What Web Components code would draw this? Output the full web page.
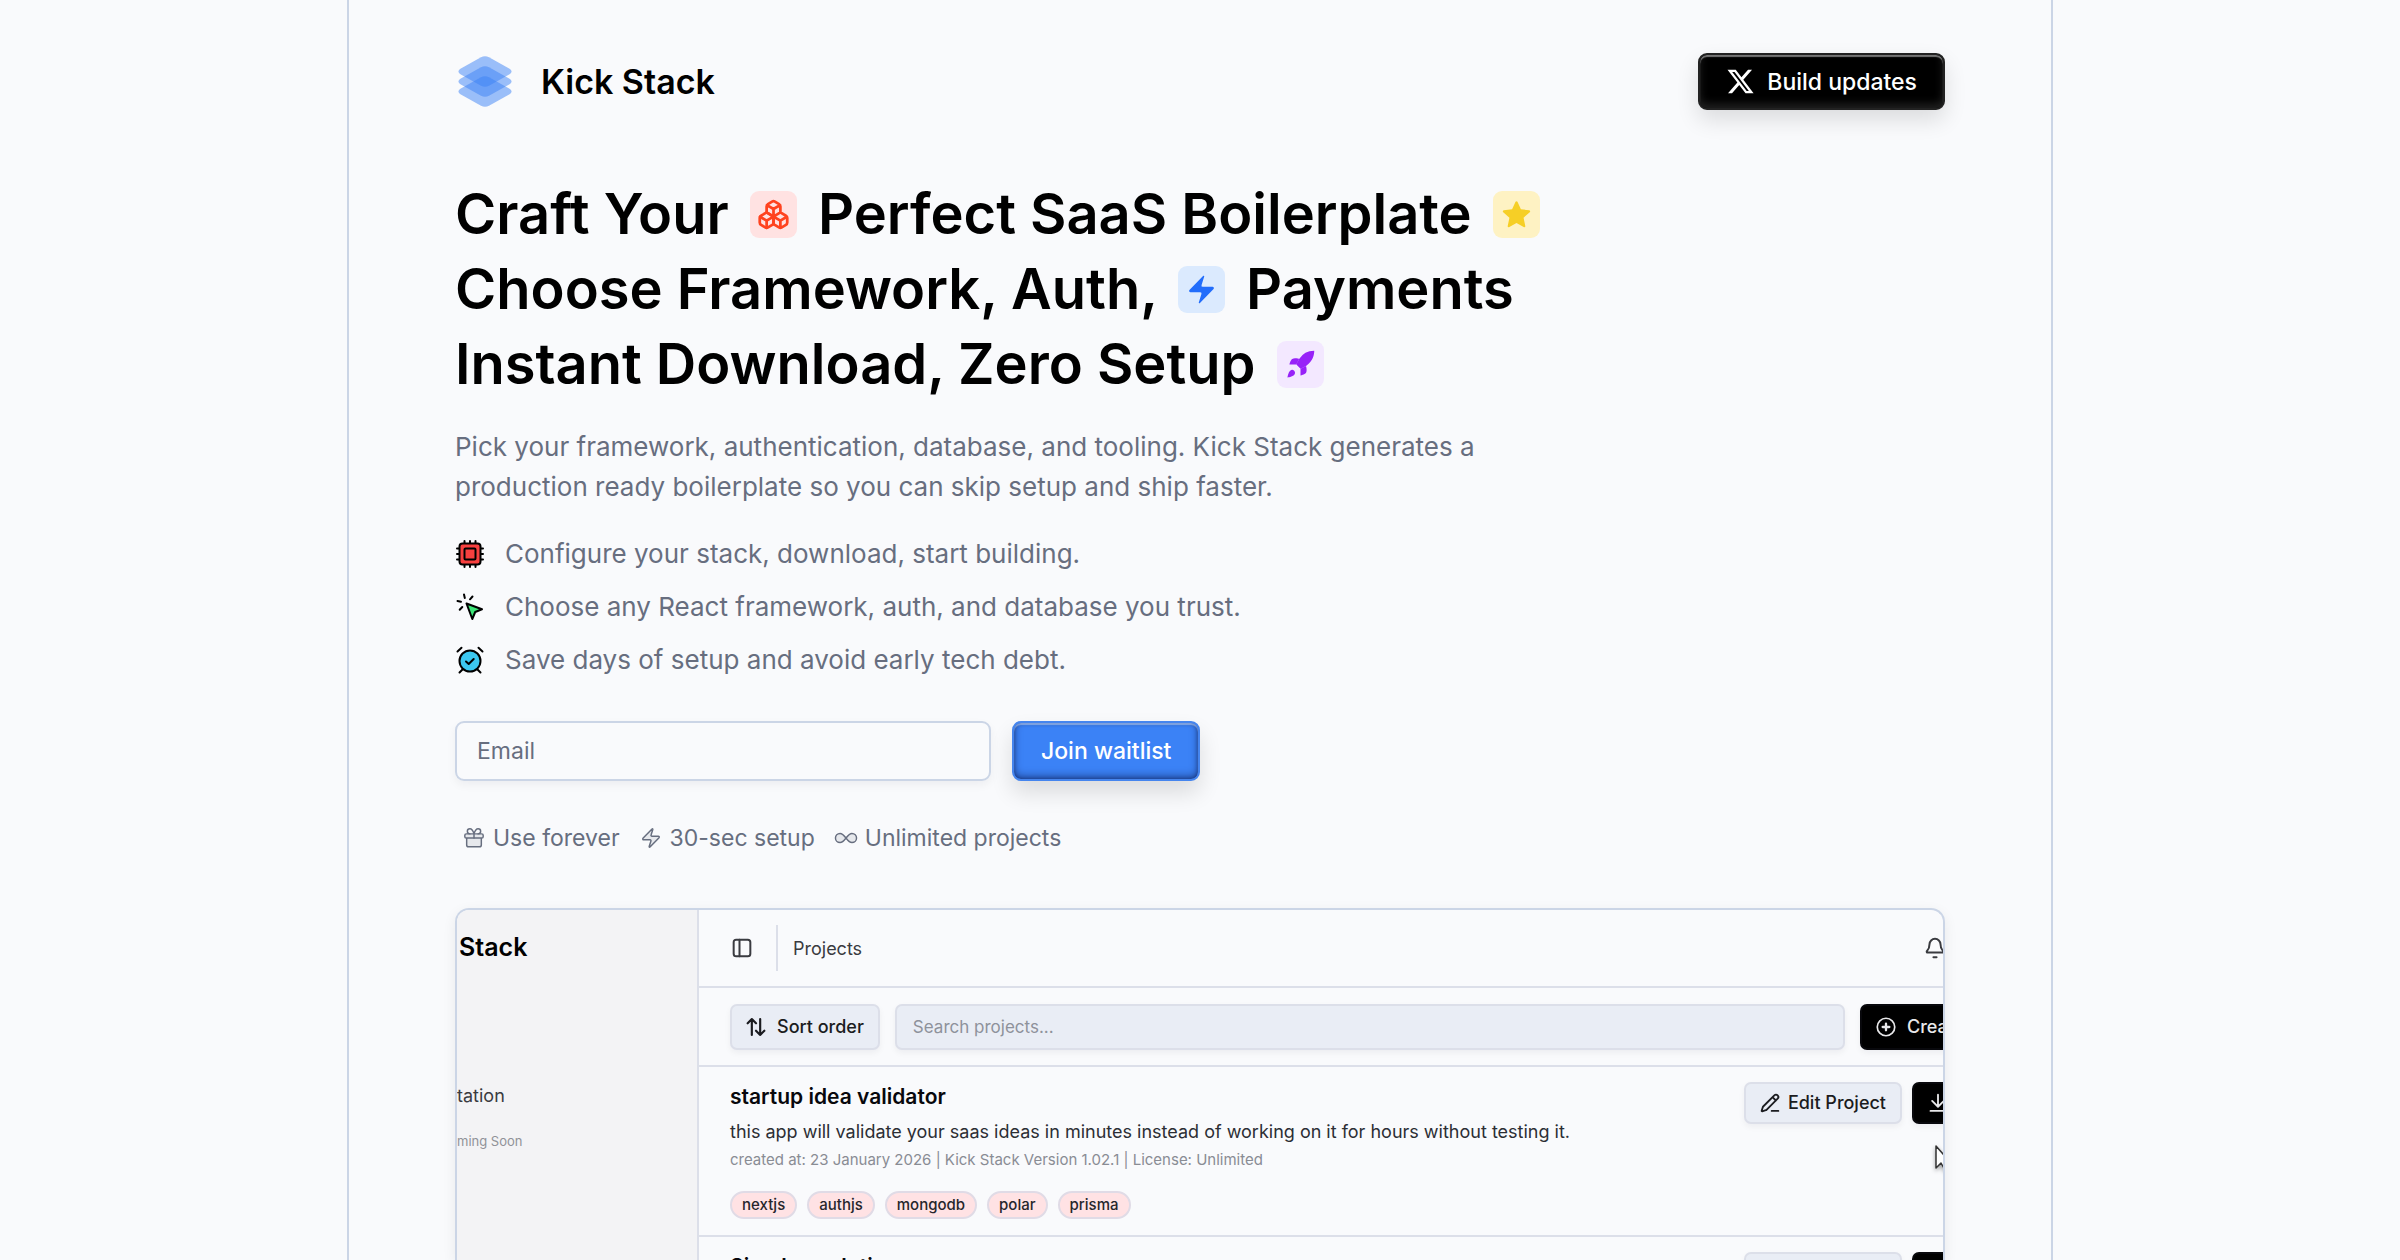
<!DOCTYPE html>
<html lang="en">
<head>
<meta charset="utf-8">
<meta name="viewport" content="width=device-width, initial-scale=1">
<title>Kick Stack</title>
<style>
  :root {
    --bg: #f9fafc;
    --line: #cbd5e6;
    --soft-line: #dcdfe9;
    --muted: #676e7f;
    --blue: #3b82f6;
    --ink: #000;
  }
  body { margin: 0; background: var(--bg); color: var(--ink); font-family: Inter, "Liberation Sans", sans-serif; }
</style>
</head>
<body>
<ks-page>
  <ks-header></ks-header>
  <ks-hero></ks-hero>
  <ks-preview></ks-preview>
</ks-page>

<script>
const ICONS = {
  logo: ['0 0 54 52', `<g fill="#3b82f6" fill-opacity=".5"><path d="M23 1.300Q27-.8 31 1.300L52 13Q55 15.500 52 18L31 29.700Q27 31.800 23 29.700L2 18Q-1 15.500 2 13Z"/><path d="M23 11.300Q27 9.200 31 11.300L52 23Q55 25.500 52 28L31 39.700Q27 41.800 23 39.700L2 28Q-1 25.500 2 23Z"/><path d="M23 21.300Q27 19.200 31 21.300L52 33Q55 35.500 52 38L31 49.700Q27 51.800 23 49.700L2 38Q-1 35.500 2 33Z"/></g>`],
  x: ['0 0 24 24', `<path fill="currentColor" d="M18.244 2.250h3.308l-7.227 8.260 8.502 11.240H16.170l-5.214-6.817L4.990 21.750H1.680l7.730-8.835L1.254 2.250H8.080l4.713 6.231zm-1.161 17.520h1.833L7.084 4.126H5.117z"/>`],
  boxes: ['0 0 24 24', `<g class="s" stroke-width="2"><path d="M2.970 12.920A2 2 0 0 0 2 14.630v3.240a2 2 0 0 0 .97 1.710l3 1.800a2 2 0 0 0 2.060 0L12 19v-5.500l-5-3-4.030 2.420Z"/><path d="m7 16.500-4.740-2.850M7 16.500l5-3M7 16.500v5.170M12 13.500V19l3.970 2.380a2 2 0 0 0 2.060 0l3-1.800a2 2 0 0 0 .97-1.710v-3.240a2 2 0 0 0-.97-1.710L17 10.500l-5 3ZM17 16.500l-5-3M17 16.500l4.740-2.850M17 16.500v5.170M7.970 4.420A2 2 0 0 0 7 6.130v4.370l5 3 5-3V6.130a2 2 0 0 0-.97-1.710l-3-1.800a2 2 0 0 0-2.060 0l-3 1.800ZM12 8 7.260 5.150M12 8l4.740-2.850M12 13.500V8"/></g>`],
  star: ['0 0 24 24', `<path fill="currentColor" d="M11.300 2.700a.8.800 0 0 1 1.400 0l2.500 5.500 6 .7a.8.800 0 0 1 .44 1.400l-4.500 4.050 1.250 5.950a.8.800 0 0 1-1.200.85L12 18.200l-5.200 2.950a.8.800 0 0 1-1.200-.85l1.250-5.950-4.500-4.050a.8.800 0 0 1 .44-1.400l6-.7z"/>`],
  zap: ['0 0 24 24', `<path fill="currentColor" d="M4 14a1 1 0 0 1-.78-1.630l9.900-10.200a.5.500 0 0 1 .86.460l-1.920 6.020A1 1 0 0 0 13 10h7a1 1 0 0 1 .78 1.630l-9.900 10.200a.5.500 0 0 1-.86-.46l1.920-6.020A1 1 0 0 0 11 14z"/>`],
  rocket: ['0 0 24 24', `<g fill="currentColor"><path d="M4.500 16.500c-1.500 1.260-2 5-2 5s3.740-.5 5-2c.71-.84.700-2.130-.09-2.910a2.180 2.180 0 0 0-2.910-.09z"/><path d="m12 15-3-3a22 22 0 0 1 2-3.950A12.880 12.880 0 0 1 22 2c0 2.720-.78 7.500-6 11a22.350 22.350 0 0 1-4 2z"/><path d="M9 12H4s.55-3.030 2-4c1.620-1.080 5 0 5 0zM12 15v5s3.030-.55 4-2c1.080-1.620 0-5 0-5z"/></g>`],
  chip: ['0 0 28 28', `<g stroke="#000" stroke-width="2" stroke-linecap="round" stroke-linejoin="round"><path d="M8.500 1v3M14 1v3M19.500 1v3M8.500 24v3M14 24v3M19.500 24v3M1 8.500h3M1 14h3M1 19.500h3M24 8.500h3M24 14h3M24 19.500h3"/><rect x="3.500" y="3.500" width="21" height="21" rx="3" fill="#f8403f"/><rect x="8.500" y="8.500" width="11" height="11" rx="1" fill="#f8403f"/></g>`],
  click: ['0 0 28 28', `<g stroke="#000" stroke-width="2" stroke-linecap="round" stroke-linejoin="round" fill="none"><path d="M8 1.500l.8 3.500M1.500 8l3.500.8M16.500 3.500L14 6.300M6.300 14l-2.600 2.800"/><path fill="#3ce577" d="M10.500 10.500L26 16.300l-6.800 2.700L16.300 26z"/></g>`],
  alarm: ['0 0 28 28', `<g stroke="#000" stroke-width="2" stroke-linecap="round" stroke-linejoin="round" fill="none"><path d="M1.500 5.500L5.500 1.800M26.500 5.500L22.500 1.800M6.500 23.500L3.500 26.500M21.500 23.500L24.500 26.500"/><circle cx="14" cy="15" r="10.500" fill="#3cc8f0"/><path d="M10 15.500l2.700 2.500 5-5"/></g>`],
  gift: ['0 0 24 24', `<g class="s" stroke-width="1.600"><path style="fill:#e6e8ec" d="M4 12v7.500a2 2 0 0 0 2 2h12a2 2 0 0 0 2-2V12"/><rect x="2" y="7.500" width="20" height="4.500" rx="1.500" style="fill:#e6e8ec"/><path d="M12 12V7.500C11 4 9.500 2 7.500 2a2.700 2.700 0 0 0 0 5.500M12 7.500C13 4 14.500 2 16.500 2a2.700 2.700 0 0 1 0 5.500"/></g>`],
  bolt: ['0 0 24 24', `<path class="s" stroke-width="1.600" style="fill:#e6e8ec" d="M4 14a1 1 0 0 1-.78-1.630l9.900-10.200a.5.500 0 0 1 .86.460l-1.920 6.020A1 1 0 0 0 13 10h7a1 1 0 0 1 .78 1.630l-9.900 10.200a.5.500 0 0 1-.86-.46l1.920-6.020A1 1 0 0 0 11 14z"/>`],
  infinity: ['0 0 24 24', `<path class="s" stroke-width="1.600" style="fill:#e6e8ec" d="M5.500 17c5.500 0 7.500-10 13-10a5 5 0 0 1 0 10c-5.500 0-7.500-10-13-10a5 5 0 1 0 0 10"/>`],
  panel: ['0 0 24 24', `<g class="s" stroke-width="2.400"><rect x="2" y="2" width="20" height="20" rx="3"/><path d="M9 2v20"/></g>`],
  sort: ['0 0 24 24', `<path class="s" stroke-width="2.600" d="M2 7.500 7 2.500l5 5M7 2.500v19M22 16.500l-5 5-5-5M17 21.500v-19"/>`],
  plus: ['0 0 24 24', `<g class="s" stroke-width="2"><circle cx="12" cy="12" r="10.500"/><path d="M8 12h8M12 8v8" stroke-width="2.800"/></g>`],
  pen: ['0 0 24 24', `<path class="s" stroke-width="2.200" d="M14 21.500h8M21.174 6.812a1 1 0 0 0-3.986-3.987L3.842 16.174a2 2 0 0 0-.5.830l-1.321 4.352a.5.500 0 0 0 .623.622l4.353-1.320a2 2 0 0 0 .83-.497zM15 5l4 4"/>`],
  download: ['0 0 24 24', `<path class="s" stroke-width="2.200" d="M12 16V2M5 9.500l7 7 7-7M21 21.500H3"/>`],
  bell: ['0 0 24 24', `<path class="s" stroke-width="2.200" d="M10.300 22h3.400M3.300 15.300A1 1 0 0 0 4 17h16a1 1 0 0 0 .74-1.670C19.400 14 18 12.500 18 8A6 6 0 0 0 6 8c0 4.500-1.400 6-2.700 7.300"/>`],
  pointer: ['0 0 16 26', `<path fill="#fff" stroke="#333" stroke-width="1.500" stroke-linejoin="round" d="M1 1v22l5-5 4 7 3-2-4-6h6z"/>`]
};

function define(name, html, ready) {
  const t = document.createElement('template');
  t.innerHTML = html;
  customElements.define(name, class extends HTMLElement {
    constructor() {
      super();
      this.attachShadow({ mode: 'open' }).append(t.content.cloneNode(true));
    }
    connectedCallback() { if (ready) ready(this, this.shadowRoot); }
  });
}

define('ks-icon', `
<style>
  :host { display: block; flex: none; width: var(--size, 24px); height: var(--size, 24px); }
  svg { display: block; width: 100%; height: 100%; overflow: visible; }
  .s { fill: none; stroke: currentColor; stroke-linecap: round; stroke-linejoin: round; }
</style>
<svg aria-hidden="true"></svg>`, (el, root) => {
  const [box, body] = ICONS[el.getAttribute('name')];
  const svg = root.querySelector('svg');
  svg.setAttribute('viewBox', box);
  svg.innerHTML = body;
});

define('ks-page', `
<style>
  :host { display: block; height: 100vh; overflow: hidden; padding: 0 24px; }
  main { box-sizing: border-box; display: flex; flex-direction: column; height: 100%; max-width: 1706px; margin: 0 auto; padding: 53px 106px 0; border: solid var(--line); border-width: 0 2px; }
</style>
<main><slot></slot></main>`);

/* Glossy button used in the header (dark) and in the form (blue). */
define('ks-button', `
<style>
  :host { display: block; flex: none; }
  button { display: flex; align-items: center; gap: 12px; height: var(--h, 57px); padding: 0 var(--pad, 26px); border: 2px solid #222; border-radius: 9px;
    background: #000; color: #fff; font: 500 23px/30px Inter, "Liberation Sans", sans-serif;
    box-shadow: inset 0 2px 1px rgba(255,255,255,.45), inset 0 -4px 8px rgba(255,255,255,.13), 0 10px 22px rgba(0,0,0,.12); }
  :host([blue]) button { background: var(--blue); border-color: #4585ee;
    box-shadow: inset 0 2px 1px rgba(255,255,255,.4), inset 0 -3px 8px rgba(0,0,40,.4), inset 0 0 4px rgba(0,0,40,.45), 0 12px 22px rgba(0,0,0,.12); }
</style>
<button type="button"><slot></slot></button>`);

define('ks-header', `
<style>
  header { display: flex; align-items: center; justify-content: space-between; margin-bottom: 67px; }
  a { display: flex; align-items: center; gap: 29px; padding-left: 3px; color: inherit; text-decoration: none; font-weight: 600; font-size: 34px; line-height: 40px; }
  a ks-icon { --size: 54px; }
  ks-button ks-icon { --size: 29px; }
</style>
<header>
  <a href="#"><ks-icon name="logo"></ks-icon>Kick Stack</a>
  <ks-button><ks-icon name="x"></ks-icon>Build updates</ks-button>
</header>`);

define('ks-chip', `
<style>
  :host { display: inline-block; overflow: hidden; box-sizing: border-box; width: 47px; height: 47px; margin: 0 7px; padding: 7px; border-radius: 9px; vertical-align: -4px; --size: 33px; }
  :host([tone=red]) { background: #ffe2e2; color: #ff431f; }
  :host([tone=yellow]) { background: #fef2c3; color: #f6cf26; }
  :host([tone=blue]) { background: #dbeafe; color: #226dfb; }
  :host([tone=purple]) { background: #f3e8ff; color: #9722f8; }
</style>
<slot></slot>`);

define('ks-feature', `
<style>
  :host { display: flex; align-items: center; gap: 21px; --size: 28px; }
</style>
<slot name="icon"></slot><span><slot></slot></span>`);

define('ks-waitlist', `
<style>
  form { display: flex; gap: 21px; margin-top: 41px; }
  input { box-sizing: border-box; width: 536px; height: 60px; padding: 0 20px; border: 2px solid var(--line); border-radius: 9px; background: transparent;
    font: 400 23px/30px Inter, "Liberation Sans", sans-serif; color: #000; box-shadow: 0 4px 10px rgba(0,0,30,.05); }
  input::placeholder { color: var(--muted); opacity: 1; }
  ks-button { --h: 60px; --pad: 27px; }
</style>
<form>
  <input type="email" placeholder="Email" aria-label="Email">
  <ks-button blue>Join waitlist</ks-button>
</form>`);

define('ks-perk', `
<style>
  :host { display: flex; align-items: center; gap: 8px; --size: 22px; }
</style>
<slot name="icon"></slot><span><slot></slot></span>`);

define('ks-hero', `
<style>
  h1 { margin: 0; font-weight: 600; font-size: 56px; line-height: 75px; }
  h1 span { display: block; white-space: nowrap; }
  p { max-width: 1060px; margin: 25px 0 0; }
  p, .features { color: var(--muted); font-size: 26px; line-height: 40px; }
  .features { display: flex; flex-direction: column; gap: 13px; margin-top: 27px; padding-left: 1px; }
  .perks { display: flex; gap: 20px; margin: 41px 0 54px; padding-left: 8px; color: var(--muted); font-size: 23px; line-height: 32px; }
</style>
<section>
  <h1>
    <span>Craft Your <ks-chip tone="red"><ks-icon name="boxes"></ks-icon></ks-chip> Perfect SaaS Boilerplate <ks-chip tone="yellow"><ks-icon name="star"></ks-icon></ks-chip></span>
    <span>Choose Framework, Auth, <ks-chip tone="blue"><ks-icon name="zap"></ks-icon></ks-chip> Payments</span>
    <span>Instant Download, Zero Setup <ks-chip tone="purple"><ks-icon name="rocket"></ks-icon></ks-chip></span>
  </h1>
  <p>Pick your framework, authentication, database, and tooling. Kick Stack generates a production ready boilerplate so you can skip setup and ship faster.</p>
  <div class="features">
    <ks-feature><ks-icon slot="icon" name="chip"></ks-icon>Configure your stack, download, start building.</ks-feature>
    <ks-feature><ks-icon slot="icon" name="click"></ks-icon>Choose any React framework, auth, and database you trust.</ks-feature>
    <ks-feature><ks-icon slot="icon" name="alarm"></ks-icon>Save days of setup and avoid early tech debt.</ks-feature>
  </div>
  <ks-waitlist></ks-waitlist>
  <div class="perks">
    <ks-perk><ks-icon slot="icon" name="gift"></ks-icon>Use forever</ks-perk>
    <ks-perk><ks-icon slot="icon" name="bolt"></ks-icon>30-sec setup</ks-perk>
    <ks-perk><ks-icon slot="icon" name="infinity"></ks-icon>Unlimited projects</ks-perk>
  </div>
</section>`);

/* Flat button of the app preview. */
define('ks-tool', `
<style>
  :host { display: block; flex: none; }
  button { box-sizing: border-box; display: flex; align-items: center; gap: var(--gap, 11px); width: 100%; height: var(--h, 42px); padding: 0 14px; border: 2px solid var(--soft-line); border-radius: 7px;
    background: #e9edf5; color: #1b1c20; font: 500 18px/24px Inter, "Liberation Sans", sans-serif; white-space: nowrap; box-shadow: 0 3px 6px rgba(0,0,30,.05); }
  :host([dark]) button { background: #000; border-color: #08080c; color: #e8e8ea; }
</style>
<button type="button"><slot></slot></button>`);

define('ks-tag', `
<style>
  :host { display: block; padding: 0 10px; border: 2px solid #e0dbe6; border-radius: 14px; background: #ffe2e4; color: #26262c; font-weight: 500; font-size: 15px; line-height: 24px; }
</style>
<slot></slot>`);

define('ks-project', `
<style>
  article { display: flex; justify-content: space-between; align-items: flex-start; box-sizing: border-box; height: 170px; padding: 15px 0 0 31px; border-bottom: 2px solid var(--soft-line); }
  h2 { margin: 0; font-weight: 600; font-size: 21px; line-height: 30px; color: #08080c; }
  .tags { display: flex; gap: 10px; margin-top: 19px; }
  .actions { display: flex; gap: 10px; --size: 20px; }
  .actions ks-tool { --gap: 8px; }
  .actions ks-tool[dark] { width: 95px; }
</style>
<article>
  <div>
    <h2><slot name="title"></slot></h2>
    <slot></slot>
    <div class="tags"><slot name="tags"></slot></div>
  </div>
  <div class="actions">
    <ks-tool><ks-icon name="pen"></ks-icon>Edit Project</ks-tool>
    <ks-tool dark><ks-icon name="download"></ks-icon></ks-tool>
  </div>
</article>`);

define('ks-preview', `
<style>
  :host { display: flex; flex: 1; min-height: 0; }
  .frame { position: relative; flex: 1; min-width: 0; display: flex; overflow: hidden; border: 2px solid var(--line); border-bottom: 0; border-radius: 14px 14px 0 0; box-shadow: 0 4px 14px rgba(0,0,30,.07); }
  aside { box-sizing: border-box; flex: none; width: 242px; border-right: 2px solid var(--soft-line); background: #f3f3f5; overflow: hidden; }
  .brand { padding: 22px 0 0 2px; font-weight: 600; font-size: 25px; line-height: 30px; }
  .nav { margin-top: 121px; font-size: 18px; line-height: 26px; color: #3a3b40; }
  .soon { margin-top: 22px; font-size: 13px; line-height: 20px; color: #909298; }
  .app { flex: none; width: calc(100% - 178px); }
  header { box-sizing: border-box; display: flex; align-items: center; height: 78px; padding: 0 61px 0 33px; border-bottom: 2px solid var(--soft-line); font-size: 18px; color: #3a3b40; --size: 20px; }
  header i { width: 2px; height: 46px; margin: 0 15px 0 24px; background: var(--soft-line); }
  header ks-icon:last-child { margin-left: auto; --size: 22px; }
  .bar { box-sizing: border-box; display: flex; align-items: center; gap: 15px; height: 79px; padding-left: 31px; border-bottom: 2px solid var(--soft-line); --h: 46px; --size: 20px; }
  .bar ks-tool[dark] { width: 147px; }
  input { flex: 1; min-width: 0; box-sizing: border-box; height: 46px; padding: 0 16px; border: 2px solid var(--soft-line); border-radius: 7px; background: #e9edf5; font: 400 17px/24px Inter, "Liberation Sans", sans-serif; box-shadow: 0 3px 6px rgba(0,0,30,.05); }
  input::placeholder { color: #8e929b; opacity: 1; }
  p { margin: 7px 0 0; font-size: 18px; line-height: 26px; color: #2c2e34; }
  small { display: block; margin-top: 3px; font-size: 15px; line-height: 24px; color: #898c94; }
  .pointer { position: absolute; right: -8px; top: 235px; width: 16px; height: 26px; filter: drop-shadow(0 2px 2px rgba(0,0,0,.35)); }
</style>
<div class="frame">
  <aside>
    <div class="brand">Stack</div>
    <div class="nav">tation</div>
    <div class="soon">ming Soon</div>
  </aside>
  <div class="app">
    <header><ks-icon name="panel"></ks-icon><i></i>Projects<ks-icon name="bell"></ks-icon></header>
    <div class="bar">
      <ks-tool><ks-icon name="sort"></ks-icon>Sort order</ks-tool>
      <input type="search" placeholder="Search projects..." aria-label="Search projects">
      <ks-tool dark><ks-icon name="plus"></ks-icon>Crea</ks-tool>
    </div>
    <ks-project>
      <span slot="title">startup idea validator</span>
      <p>this app will validate your saas ideas in minutes instead of working on it for hours without testing it.</p>
      <small>created at: 23 January 2026 | Kick Stack Version 1.02.1 | License: Unlimited</small>
      <ks-tag slot="tags">nextjs</ks-tag><ks-tag slot="tags">authjs</ks-tag><ks-tag slot="tags">mongodb</ks-tag><ks-tag slot="tags">polar</ks-tag><ks-tag slot="tags">prisma</ks-tag>
    </ks-project>
    <ks-project><span slot="title">Simple analytics</span></ks-project>
  </div>
  <ks-icon class="pointer" name="pointer"></ks-icon>
</div>`);
</script>
</body>
</html>
